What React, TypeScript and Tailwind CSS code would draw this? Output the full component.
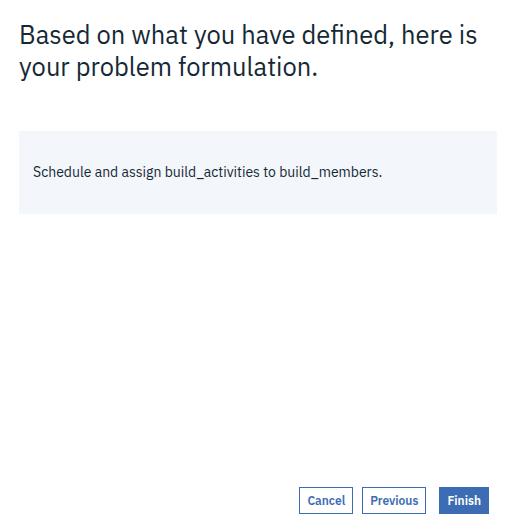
import React from "react";

function FooterButton({ label, primary }: { label: string; primary?: boolean }) {
  return (
    <button
      className={
        primary
          ? "h-[27px] border border-[#3c6db4] bg-[#3c6db4] px-[7px] text-[12px] font-semibold text-white"
          : "h-[27px] border border-[#3c6db4] bg-white px-[7px] text-[12px] font-semibold text-[#3c6db4]"
      }
    >
      {label}
    </button>
  );
}

export default function App() {
  return (
    <div
      className="flex h-[522px] w-[512px] flex-col bg-white pl-[19px] pr-[15px] text-[#152935]"
      style={{ fontFamily: '"IBM Plex Sans", Roboto, "Noto Sans", sans-serif' }}
    >
      <h1 className="mt-[19px] text-[25.5px] font-normal leading-[32px]">
        Based on what you have defined, here is your problem formulation.
      </h1>

      <div className="mt-[48px] bg-[#f3f6fb] px-[14px] py-[32px] text-[14px] leading-[19px]">
        Schedule and assign build_activities to build_members.
      </div>

      <div className="mt-auto mb-[8px] flex justify-end pr-[8px]">
        <div className="flex items-center">
          <FooterButton label="Cancel" />
          <div className="w-[9px]" />
          <FooterButton label="Previous" />
          <div className="w-[13px]" />
          <FooterButton label="Finish" primary />
        </div>
      </div>
    </div>
  );
}
